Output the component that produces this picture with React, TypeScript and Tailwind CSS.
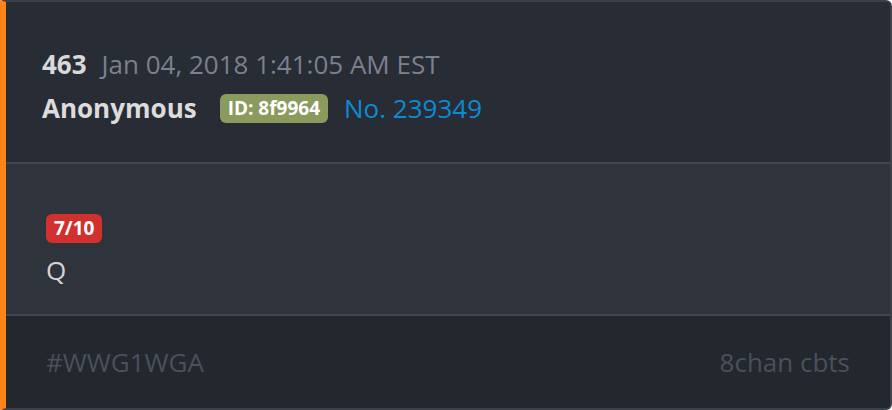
import React from "react";

export default function App() {
  return (
    <div className="w-[892px] h-[410px] bg-white font-['Open_Sans',sans-serif]">
      <div className="flex flex-col h-full bg-[#282c35] border-2 border-[#3b4049] border-l-[6px] border-l-[#fd8416] rounded-r-md overflow-hidden">
        {/* Header */}
        <div className="flex flex-col gap-[8px] pl-[36px] pt-[44px] pb-[36px] bg-[#282c35]">
          <div className="flex items-center h-[36px] text-[26px]">
            <span className="font-bold text-[#d9d9d9]">463</span>
            <span className="ml-[15px] text-[#7c808f]">Jan 04, 2018 1:41:05 AM EST</span>
          </div>
          <div className="flex items-center h-[36px] text-[26px]">
            <span className="font-bold text-[#dcdcdc]">Anonymous</span>
            <span className="ml-[23px] h-[29px] px-[8px] flex items-center rounded-md bg-[#8b9a5d] text-white font-bold text-[19px]">
              ID: 8f9964
            </span>
            <span className="ml-[16px] text-[#0b8bd2]">No. 239349</span>
          </div>
        </div>

        {/* Body */}
        <div className="flex flex-col items-start pl-[40px] pt-[50px] pb-[26px] bg-[#2e333c] border-t-2 border-[#40454f]">
          <span className="h-[29px] px-[8px] flex items-center rounded-md bg-[#d2302e] text-white font-bold text-[19px]">
            7/10
          </span>
          <div className="mt-[9px] h-[36px] flex items-center text-[26px] text-[#d4d4d4]">Q</div>
        </div>

        {/* Footer */}
        <div className="flex flex-1 items-center justify-between pl-[40px] pr-[40px] bg-[#23272e] border-t-2 border-[#40454f] text-[26px] text-[#4b505b]">
          <span>#WWG1WGA</span>
          <span>8chan cbts</span>
        </div>
      </div>
    </div>
  );
}
